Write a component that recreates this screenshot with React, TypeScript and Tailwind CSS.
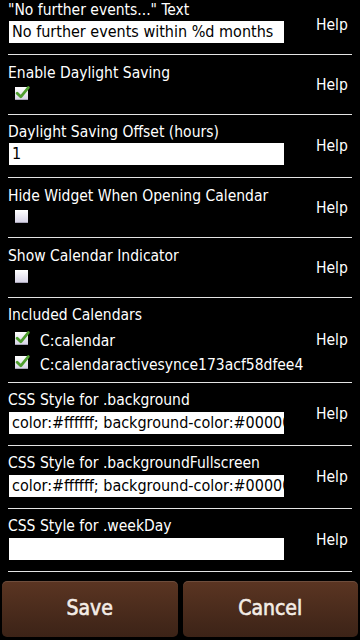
import { ReactNode } from "react";

type CheckProps = { checked?: boolean };

function CheckBox({ checked }: CheckProps) {
  return (
    <div className="relative h-[13px] w-[13px] shrink-0 bg-gradient-to-b from-white to-[#d6d2e6] shadow-[inset_0_-1px_0_#a9a5b8]">
      {checked && (
        <svg
          viewBox="0 0 14 14"
          className="absolute left-[0px] top-[-2px] h-[15px] w-[15px]"
        >
          <path
            d="M2 7.6 L5.4 11 L12.4 2.4"
            fill="none"
            stroke="#4f9e2f"
            strokeWidth="2.6"
            strokeLinecap="round"
            strokeLinejoin="round"
          />
        </svg>
      )}
    </div>
  );
}

function Separator() {
  return <div className="mx-2 h-px bg-[#e4e4e4]" />;
}

type RowProps = { className?: string; helpClass?: string; children: ReactNode };

// padding sits on the left column so "Help" centres on the whole row
function Row({ className, helpClass, children }: RowProps) {
  return (
    <div className="flex items-center px-2">
      <div className={"min-w-0 flex-1 " + (className ?? "")}>{children}</div>
      <div
        className={
          "w-[36px] shrink-0 text-[15.5px] leading-[20px] text-white " +
          (helpClass ?? "")
        }
      >
        Help
      </div>
    </div>
  );
}

function Label({ children }: { children: ReactNode }) {
  return (
    <div className="whitespace-nowrap text-[15.5px] leading-[20px] text-white">
      {children}
    </div>
  );
}

function TextBox({ value, className }: { value: string; className?: string }) {
  return (
    <input
      readOnly
      value={value}
      className={
        "ml-px block h-[22px] w-[275px] bg-white pl-[3px] text-[16px] leading-[22px] text-black outline-none " +
        (className ?? "")
      }
    />
  );
}

export default function App() {
  const css = "color:#ffffff; background-color:#000000;";
  const btn =
    "h-[56px] flex-1 rounded-[5px] bg-gradient-to-b from-[#5b3522] to-[#3c2317] text-[21px] text-[#f4ece6] [-webkit-text-stroke:0.6px_#f4ece6] shadow-[inset_0_1px_0_rgba(255,255,255,0.12)]";

  return (
    <div className="flex h-[640px] w-[360px] flex-col overflow-hidden bg-black font-['DejaVu_Sans_Condensed','DejaVu_Sans',sans-serif]">
      <Row className="pb-[11px]" helpClass="mb-[5px]">
        <Label>"No further events..." Text</Label>
        <TextBox value="No further events within %d months" className="mt-px" />
      </Row>
      <Separator />

      <Row className="pt-[8px] pb-[14px]">
        <Label>Enable Daylight Saving</Label>
        <div className="ml-[7px] mt-[4px]">
          <CheckBox checked />
        </div>
      </Row>
      <Separator />

      <Row className="pt-[7px] pb-[12px]">
        <Label>Daylight Saving Offset (hours)</Label>
        <TextBox value="1" className="mt-px" />
      </Row>
      <Separator />

      <Row className="pt-[8px] pb-[14px]">
        <Label>Hide Widget When Opening Calendar</Label>
        <div className="ml-[7px] mt-[4px]">
          <CheckBox />
        </div>
      </Row>
      <Separator />

      <Row className="pt-[8px] pb-[14px]">
        <Label>Show Calendar Indicator</Label>
        <div className="ml-[7px] mt-[4px]">
          <CheckBox />
        </div>
      </Row>
      <Separator />

      <Row className="pt-[7px] pb-[5px]">
        <Label>Included Calendars</Label>
        <div className="mt-[4px]">
          {["C:calendar", "C:calendaractivesynce173acf58dfee4"].map((name) => (
            <div key={name} className="flex h-[24px] items-start">
              <div className="ml-[7px] mt-[3px]">
                <CheckBox checked />
              </div>
              <span className="ml-[12px] whitespace-nowrap text-[15.5px] leading-[24px] text-white">
                {name}
              </span>
            </div>
          ))}
        </div>
      </Row>
      <Separator />

      <Row className="pt-[7px] pb-[11px]">
        <Label>CSS Style for .background</Label>
        <TextBox value={css} className="mt-[2px]" />
      </Row>
      <Separator />

      <Row className="pt-[7px] pb-[11px]">
        <Label>CSS Style for .backgroundFullscreen</Label>
        <TextBox value={css} className="mt-[2px]" />
      </Row>
      <Separator />

      <Row className="pt-[7px] pb-[11px]">
        <Label>CSS Style for .weekDay</Label>
        <TextBox value="" className="mt-[2px]" />
      </Row>
      <Separator />

      <div className="flex gap-[5px] px-[2px] pt-[9px] pb-[3px]">
        <button className={btn}>Save</button>
        <button className={btn}>Cancel</button>
      </div>
    </div>
  );
}
